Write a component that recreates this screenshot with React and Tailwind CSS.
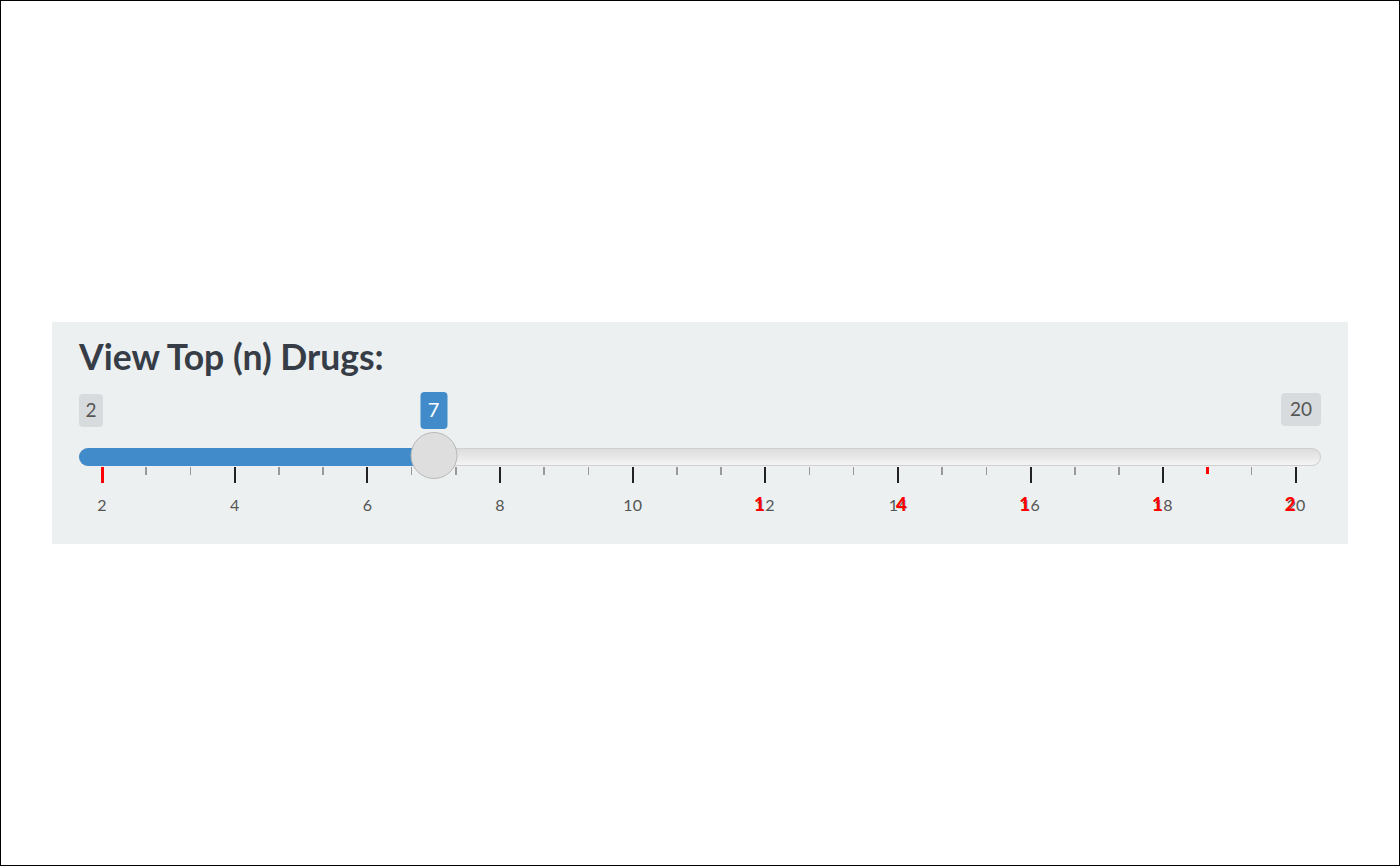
import React from "react";

const majors = [2, 4, 6, 8, 10, 12, 14, 16, 18, 20];

// red overlay artefacts: which digit index of a label gets a red bold copy
const redOverlay = { 12: 0, 14: 1, 16: 0, 18: 0, 20: 0 };

function TickLabel({ v }) {
  const s = String(v);
  const ri = redOverlay[v];
  return (
    <div className="w-0 flex justify-center">
      <div className="text-[16px] leading-[18px] text-[#555] whitespace-nowrap">
        {s.split("").map((d, i) => (
          <span key={i} className="relative">
            {d}
            {ri === i && (
              <span className="absolute left-[-2px] top-[-1px] text-[18.5px] leading-[20px] font-black text-[#ff0000]">{d}</span>
            )}
          </span>
        ))}
      </div>
    </div>
  );
}

function Tick({ kind }) {
  if (kind === "major") return <div className="w-0 flex justify-center"><div className="shrink-0 w-[2px] h-[16px] bg-[#222]" /></div>;
  if (kind === "majorRed") return <div className="w-0 flex justify-center"><div className="shrink-0 w-[3px] h-[16px] bg-[#ff0000]" /></div>;
  if (kind === "minorRed") return <div className="w-0 flex justify-center"><div className="shrink-0 w-[3px] h-[7px] bg-[#ff0000]" /></div>;
  return <div className="w-0 flex justify-center"><div className="shrink-0 w-[1.5px] h-[8px] bg-[#999]" /></div>;
}

export default function App() {
  const ticks = [];
  majors.forEach((v, i) => {
    ticks.push(v === 2 ? "majorRed" : "major");
    if (i < majors.length - 1) {
      ticks.push(v === 18 ? "minorRed" : "minor");
      ticks.push("minor");
    }
  });
  const value = 7;
  const fill = 23 + ((value - 2) / 18) * 1194; // px from track start

  return (
    <div
      className="w-[1400px] h-[866px] border border-black bg-white pt-[321px] pl-[51px]"
      style={{ fontFamily: "Lato, 'Noto Sans', sans-serif" }}
    >
      <div className="w-[1296px] h-[222px] bg-[#ecf0f1] pl-[27px] pt-[14px]">
        <div className="text-[35.5px] leading-[42px] font-bold text-[#363d47]">View Top (n) Drugs:</div>

        <div className="w-[1242px] mt-[14px] flex flex-col">
          {/* min / value / max labels */}
          <div className="relative h-[37px] flex justify-between items-start">
            <div className="mt-[2px] w-[24px] h-[33px] rounded-[4px] bg-[#d7dbdd] text-[19px] text-[#555] flex items-center justify-center">
              2
            </div>
            <div className="mt-[1px] w-[40px] h-[33px] rounded-[4px] bg-[#d7dbdd] text-[19px] text-[#555] flex items-center justify-center">
              20
            </div>
            <div
              className="absolute top-0 w-[27px] h-[37px] -translate-x-1/2 rounded-[4px] bg-[#428bca] text-[20px] text-white flex items-center justify-center pb-[3px]"
              style={{ left: fill }}
            >
              7
            </div>
          </div>

          {/* track */}
          <div className="relative mt-[19px] h-[18px] rounded-full bg-gradient-to-b from-[#dcdcdc] to-[#f4f4f4] border border-[#cfcfcf]">
            <div className="h-[18px] -mt-px -ml-px rounded-l-full bg-[#428bca]" style={{ width: fill + 2 }} />
            <div
              className="absolute top-[-17px] w-[47px] h-[47px] -translate-x-1/2 rounded-full bg-[#dedede] border border-[#b8b8b8]"
              style={{ left: fill - 1 }}
            />
          </div>

          {/* ticks */}
          <div className="ml-[23px] w-[1194px] mt-[1px] h-[16px] flex justify-between items-start">
            {ticks.map((k, i) => (
              <Tick key={i} kind={k} />
            ))}
          </div>

          {/* tick labels */}
          <div className="ml-[23px] w-[1194px] mt-[13px] flex justify-between">
            {majors.map((v) => (
              <TickLabel key={v} v={v} />
            ))}
          </div>
        </div>
      </div>
    </div>
  );
}
